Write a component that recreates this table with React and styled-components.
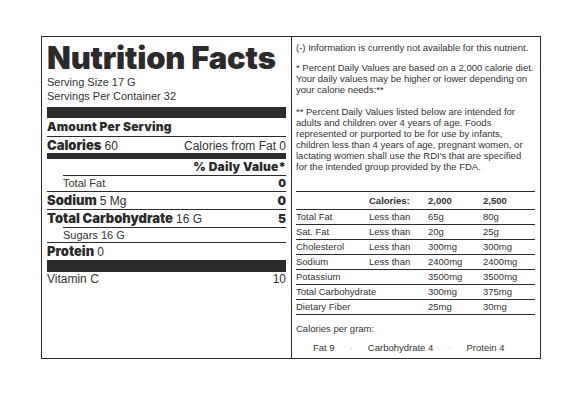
import React from "react";
import styled, { createGlobalStyle } from "styled-components";

const Global = createGlobalStyle`
  html, body { margin: 0; padding: 0; background: #fff; }
  body { font-family: "Liberation Sans", Arial, sans-serif; color: #333; }
`;

const Page = styled.div`
  padding: 36px 0 0 41px;
`;

const Box = styled.div`
  box-sizing: border-box;
  width: 500px;
  height: 323px;
  border: 1px solid #2b2b2b;
  display: flex;
`;

const Left = styled.div`
  box-sizing: border-box;
  width: 250px;
  border-right: 1px solid #2b2b2b;
  padding: 4px 5px 0 5px;
  display: flex;
  flex-direction: column;
`;

const Heavy = `"Inter", "Liberation Sans", Arial, sans-serif`;

const Title = styled.div`
  font-family: ${Heavy};
  font-weight: 900;
  font-size: 31px;
  line-height: 34px;
  letter-spacing: -0.2px;
  color: #2b2b2b;
  white-space: nowrap;
`;

const Serving = styled.div`
  font-size: 11px;
  line-height: 14px;
`;

const Bar = styled.div`
  background: #2b2b2b;
  height: ${(p) => p.$h}px;
  margin-top: ${(p) => p.$mt || 0}px;
`;

const Row = styled.div`
  display: flex;
  justify-content: space-between;
  align-items: baseline;
  border-top: ${(p) => (p.$line ? "1px solid #2b2b2b" : "none")};
  margin-left: ${(p) => (p.$indent ? 16 : 0)}px;
  height: ${(p) => p.$h}px;
  line-height: ${(p) => p.$h}px;
  font-size: ${(p) => p.$fs || 11}px;
  white-space: nowrap;
`;

const Strong = styled.span`
  font-family: ${Heavy};
  font-weight: 900;
  font-size: ${(p) => p.$fs || 13}px;
  letter-spacing: ${(p) => p.$ls || 0}px;
  color: #2b2b2b;
`;

const Light = styled.span`
  font-size: ${(p) => p.$fs || 12}px;
`;

const DV = styled.div`
  text-align: right;
  font-family: ${Heavy};
  font-weight: 900;
  font-size: 12px;
  letter-spacing: 0.2px;
  line-height: 16px;
  color: #2b2b2b;
`;

const Right = styled.div`
  box-sizing: border-box;
  flex: 1;
  padding: 2px 5px 0 4px;
  font-size: 9.5px;
  line-height: 11px;
  color: #333;
  display: flex;
  flex-direction: column;
`;

const Para = styled.p`
  margin: ${(p) => p.$mt || 0}px 0 0 0;
`;

const Table = styled.div`
  margin-top: 19px;
  border-top: 1px solid #2b2b2b;
`;

const TRow = styled.div`
  display: grid;
  grid-template-columns: 73px 59px 55px 1fr;
  height: ${(p) => p.$h || 14}px;
  line-height: ${(p) => p.$h || 14}px;
  border-bottom: 1px solid #2b2b2b;
  font-weight: ${(p) => (p.$head ? 700 : 400)};
  white-space: nowrap;
`;

const PerGram = styled.div`
  margin-top: 8px;
`;

const Macros = styled.div`
  display: flex;
  gap: 15px;
  margin-top: 8px;
  padding-left: 17px;
`;

const Dot = styled.span`
  color: #aaa;
`;

const rows = [
  ["Total Fat", "Less than", "65g", "80g"],
  ["Sat. Fat", "Less than", "20g", "25g"],
  ["Cholesterol", "Less than", "300mg", "300mg"],
  ["Sodium", "Less than", "2400mg", "2400mg"],
  ["Potassium", "", "3500mg", "3500mg"],
  ["Total Carbohydrate", "", "300mg", "375mg"],
  ["Dietary Fiber", "", "25mg", "30mg"],
];

export default function App() {
  return (
    <>
      <Global />
      <Page>
        <Box>
          <Left>
            <Title>Nutrition Facts</Title>
            <Serving>Serving Size 17 G</Serving>
            <Serving>Servings Per Container 32</Serving>
            <Bar $h={11} $mt={4} />
            <Row $h={18}>
              <Strong $fs={12} $ls={0.2}>Amount Per Serving</Strong>
            </Row>
            <Row $line $h={16}>
              <span>
                <Strong>Calories</Strong> <Light>60</Light>
              </span>
              <Light>Calories from Fat 0</Light>
            </Row>
            <Bar $h={6} />
            <DV>% Daily Value*</DV>
            <Row $line $indent $h={15}>
              <Light $fs={11}>Total Fat</Light>
              <Strong $fs={11}>0</Strong>
            </Row>
            <Row $line $h={17}>
              <span>
                <Strong>Sodium</Strong> <Light>5 Mg</Light>
              </span>
              <Strong $fs={12}>0</Strong>
            </Row>
            <Row $line $h={17}>
              <span>
                <Strong>Total Carbohydrate</Strong> <Light>16 G</Light>
              </span>
              <Strong $fs={12}>5</Strong>
            </Row>
            <Row $line $indent $h={14}>
              <Light $fs={11}>Sugars 16 G</Light>
            </Row>
            <Row $line $h={17}>
              <span>
                <Strong>Protein</Strong> <Light>0</Light>
              </span>
            </Row>
            <Bar $h={12} />
            <Row $h={14}>
              <Light>Vitamin C</Light>
              <Light>10</Light>
            </Row>
          </Left>
          <Right>
            <Para $mt={3}>(-) Information is currently not available for this nutrient.</Para>
            <Para $mt={9}>
              * Percent Daily Values are based on a 2,000 calorie diet. Your daily values may be
              higher or lower depending on your calorie needs:**
            </Para>
            <Para $mt={11}>
              ** Percent Daily Values listed below are intended for adults and children over 4
              years of age. Foods represented or purported to be for use by infants, children less
              than 4 years of age, pregnant women, or lactating women shall use the RDI's that are
              specified
              <br />
              for the intended group provided by the FDA.
            </Para>
            <Table>
              <TRow $head $h={17}>
                <span />
                <span>Calories:</span>
                <span>2,000</span>
                <span>2,500</span>
              </TRow>
              {rows.map((r) => (
                <TRow key={r[0]}>
                  <span>{r[0]}</span>
                  <span>{r[1]}</span>
                  <span>{r[2]}</span>
                  <span>{r[3]}</span>
                </TRow>
              ))}
            </Table>
            <PerGram>Calories per gram:</PerGram>
            <Macros>
              <span>Fat 9</span>
              <Dot>·</Dot>
              <span>Carbohydrate 4</span>
              <Dot>·</Dot>
              <span>Protein 4</span>
            </Macros>
          </Right>
        </Box>
      </Page>
    </>
  );
}
